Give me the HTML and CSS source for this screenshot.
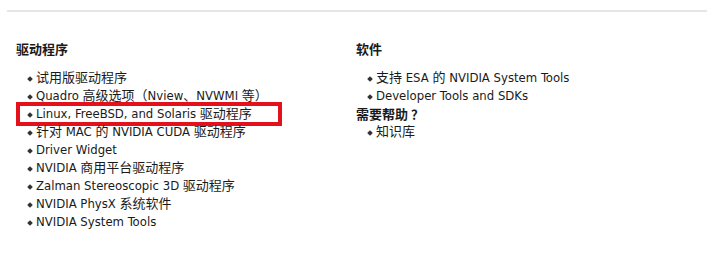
FILE: index.html
```html
<!DOCTYPE html>
<html lang="zh-CN">
<head>
    <meta charset="UTF-8">
    <title>NVIDIA 驱动程序</title>
    <link rel="stylesheet" href="styles.css">
</head>
<body>
    <div class="divider"></div>
    <div class="columns">
        <div class="col">
            <h3 class="col-title">驱动程序</h3>
            <ul class="links">
                <li>试用版驱动程序</li>
                <li>Quadro 高级选项（Nview、NVWMI 等）</li>
                <li class="marked">Linux, FreeBSD, and Solaris 驱动程序</li>
                <li>针对 MAC 的 NVIDIA CUDA 驱动程序</li>
                <li>Driver Widget</li>
                <li>NVIDIA 商用平台驱动程序</li>
                <li>Zalman Stereoscopic 3D 驱动程序</li>
                <li>NVIDIA PhysX 系统软件</li>
                <li>NVIDIA System Tools</li>
            </ul>
        </div>
        <div class="col">
            <h3 class="col-title">软件</h3>
            <ul class="links">
                <li>支持 ESA 的 NVIDIA System Tools</li>
                <li>Developer Tools and SDKs</li>
            </ul>
            <h3 class="col-title">需要帮助 ？</h3>
            <ul class="links tight">
                <li>知识库</li>
            </ul>
        </div>
    </div>
</body>
</html>
```

FILE: styles.css
```css
body { margin: 0; background: #fff; color: #1a1a1a; font-family: "DejaVu Sans Condensed", "DejaVu Sans", "Noto Sans CJK SC", sans-serif; font-size: 13px; }
.divider { margin: 10px 18px 0 7px; height: 2px; background: #e6e6e6; }
.columns { display: flex; padding: 28px 0 0 16px; }
.col { width: 340px; }
.col-title { margin: 0; font-size: 13px; font-weight: bold; line-height: 18px; font-family: "Noto Sans CJK SC", sans-serif; }
.links { list-style: none; margin: 11px 0 0 0; padding: 0 0 0 20px; }
.links li { position: relative; line-height: 18px; }
.links li::before { content: ""; position: absolute; left: -8px; top: 8px; width: 4px; height: 4px; background: #333; transform: rotate(45deg); }
.links.tight { margin-top: 0; }
.marked { outline: 4px solid #e3111b; outline-offset: -1px; margin-left: -17px; padding-left: 17px; width: 243px; }
.marked::before { left: 9px !important; }
```
